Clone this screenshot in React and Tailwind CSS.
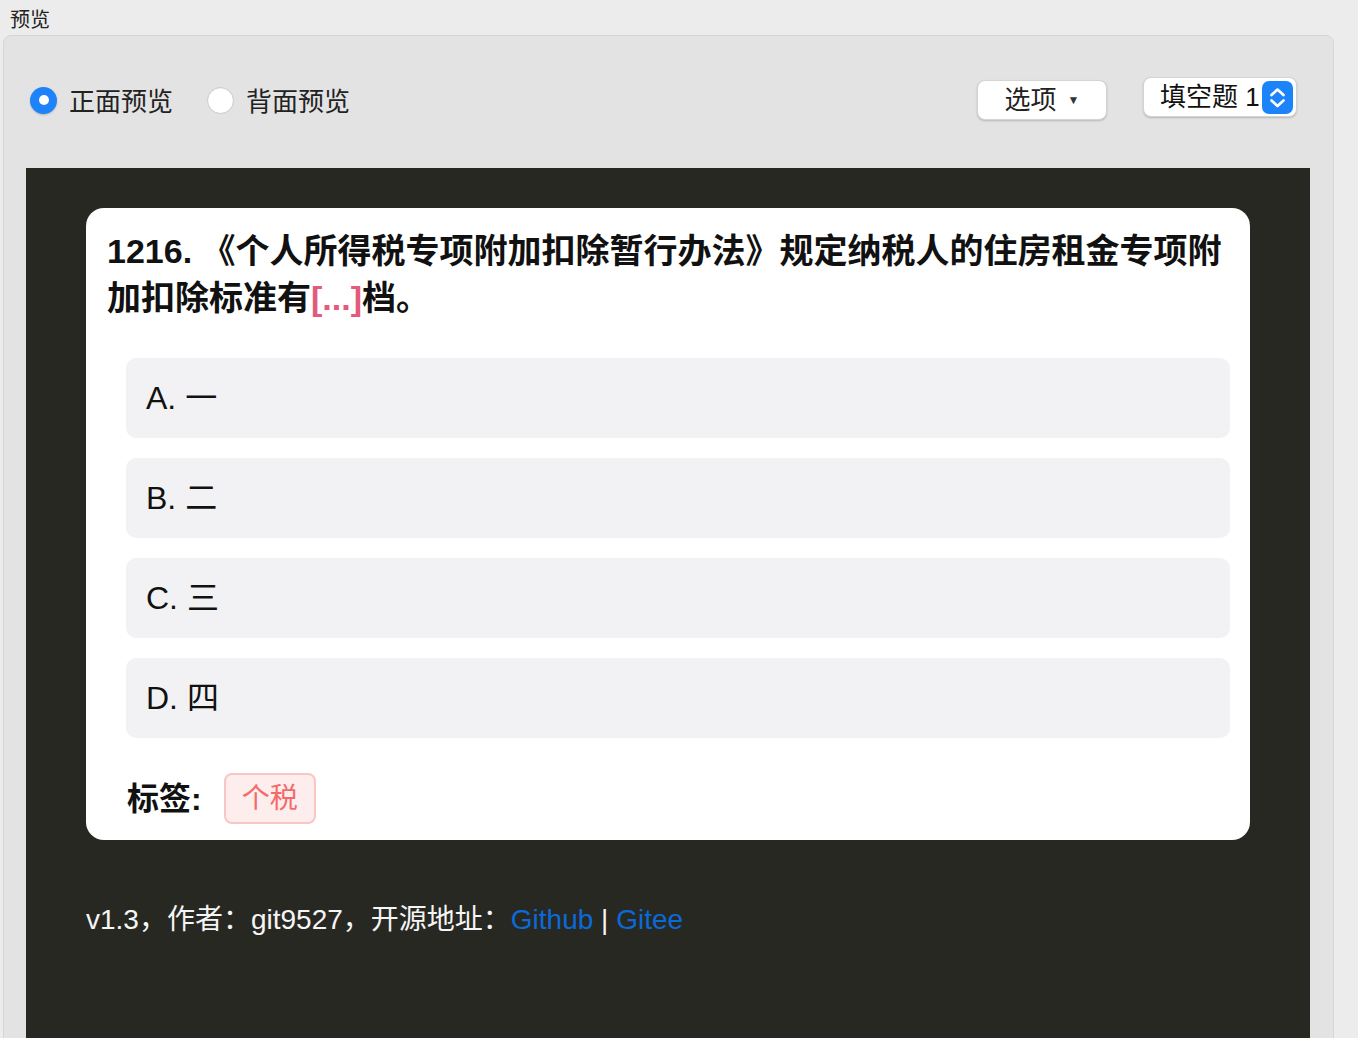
import React, { useState } from 'react';

const FONT = { fontFamily: '"Liberation Sans", "Noto Sans CJK SC", sans-serif' };

const OPTIONS = [
  { key: 'A', text: '一' },
  { key: 'B', text: '二' },
  { key: 'C', text: '三' },
  { key: 'D', text: '四' }
];

// macOS style radio
const Radio = ({ checked, label, onClick }) => (
  <button type="button" onClick={onClick} className="flex items-center gap-[12px]">
    {checked ? (
      <span className="w-[27px] h-[27px] rounded-full bg-[#1e82fa] flex items-center justify-center shadow-[0_1px_2px_rgba(0,0,0,0.2)]">
        <span className="w-[10px] h-[10px] rounded-full bg-white" />
      </span>
    ) : (
      <span className="w-[27px] h-[27px] rounded-full bg-white border border-[#c9c9c9] shadow-[inset_0_1px_1px_rgba(0,0,0,0.05)]" />
    )}
    <span className="text-[26px] text-[#222] leading-[30px] pt-[3px]">{label}</span>
  </button>
);

const Stepper = () => (
  <span className="w-[31px] h-[33px] rounded-[7px] bg-[#1c84fb] flex items-center justify-center">
    <svg width="31" height="33" viewBox="0 0 31 33" fill="none">
      <path d="M9.5 14 L15.5 8.5 L21.5 14" stroke="white" strokeWidth="2.6" strokeLinecap="round" strokeLinejoin="round" />
      <path d="M9.5 19.5 L15.5 25 L21.5 19.5" stroke="white" strokeWidth="2.6" strokeLinecap="round" strokeLinejoin="round" />
    </svg>
  </span>
);

export default function App() {
  const [side, setSide] = useState('front');

  return (
    <div className="h-screen overflow-hidden bg-[#ececec]" style={FONT}>
      {/* Title */}
      <div className="h-[35px] px-[10px] pt-[7px] text-[20px] leading-[26px] text-[#222]">预览</div>

      {/* Group box */}
      <div className="ml-[3px] w-[1331px] h-[1100px] rounded-[8px] border border-[#d6d6d6] bg-[#e3e3e3]">
        {/* Toolbar */}
        <div className="h-[132px] pb-[4px] pl-[26px] pr-[36px] flex items-center">
          <div className="flex items-center gap-[34px]">
            <Radio checked={side === 'front'} label="正面预览" onClick={() => setSide('front')} />
            <Radio checked={side === 'back'} label="背面预览" onClick={() => setSide('back')} />
          </div>
          <div className="ml-auto flex items-center gap-[36px]">
            <button type="button" className="w-[130px] h-[40px] rounded-[8px] bg-white border border-[#d4d4d4] shadow-[0_1px_2px_rgba(0,0,0,0.2)] flex items-center justify-center gap-[11px]">
              <span className="text-[26px] text-[#222] leading-none">选项</span>
              <span className="text-[12px] text-[#333] leading-none">▼</span>
            </button>
            <div className="mb-[6px] w-[154px] h-[40px] rounded-[8px] bg-white border border-[#d4d4d4] shadow-[0_1px_2px_rgba(0,0,0,0.2)] flex items-center pl-[16px] pr-[3px]">
              <span className="text-[26px] text-[#111] leading-none">填空题 1</span>
              <span className="ml-auto"><Stepper /></span>
            </div>
          </div>
        </div>

        {/* Preview area */}
        <div className="ml-[22px] w-[1284px] h-[900px] bg-[#282823] pt-[40px] pl-[60px]">
          <div className="w-[1164px] rounded-[18px] bg-white px-[20px] pt-[20px] pb-[16px]">
            <div className="text-[34px] font-bold leading-[47px] text-[#111] pl-[1px]">
              1216. 《个人所得税专项附加扣除暂行办法》规定纳税人的住房租金专项附加扣除标准有<span className="text-[#e25a7c]">[...]</span>档。
            </div>

            <div className="mt-[36px] ml-[20px] flex flex-col gap-[20px]">
              {OPTIONS.map(o => (
                <div key={o.key} className="h-[80px] rounded-[10px] bg-[#f2f2f4] flex items-center pl-[20px] text-[32px] text-[#111]">
                  {o.key}. {o.text}
                </div>
              ))}
            </div>

            <div className="mt-[35px] ml-[21px] flex items-center gap-[22px]">
              <span className="text-[32px] font-bold text-[#111] leading-none">标签:</span>
              <span className="h-[51px] px-[16px] rounded-[8px] border-2 border-[#f9c6c6] bg-[#fdeded] text-[28px] text-[#f26b6b] flex items-center">个税</span>
            </div>
          </div>

          <div className="mt-[60px] text-[28px] leading-[40px] text-[#f5f5f5]">
            v1.3，作者：git9527，开源地址：<a className="text-[#0a6ad8]">Github</a> | <a className="text-[#0a6ad8]">Gitee</a>
          </div>
        </div>
      </div>
    </div>
  );
}
